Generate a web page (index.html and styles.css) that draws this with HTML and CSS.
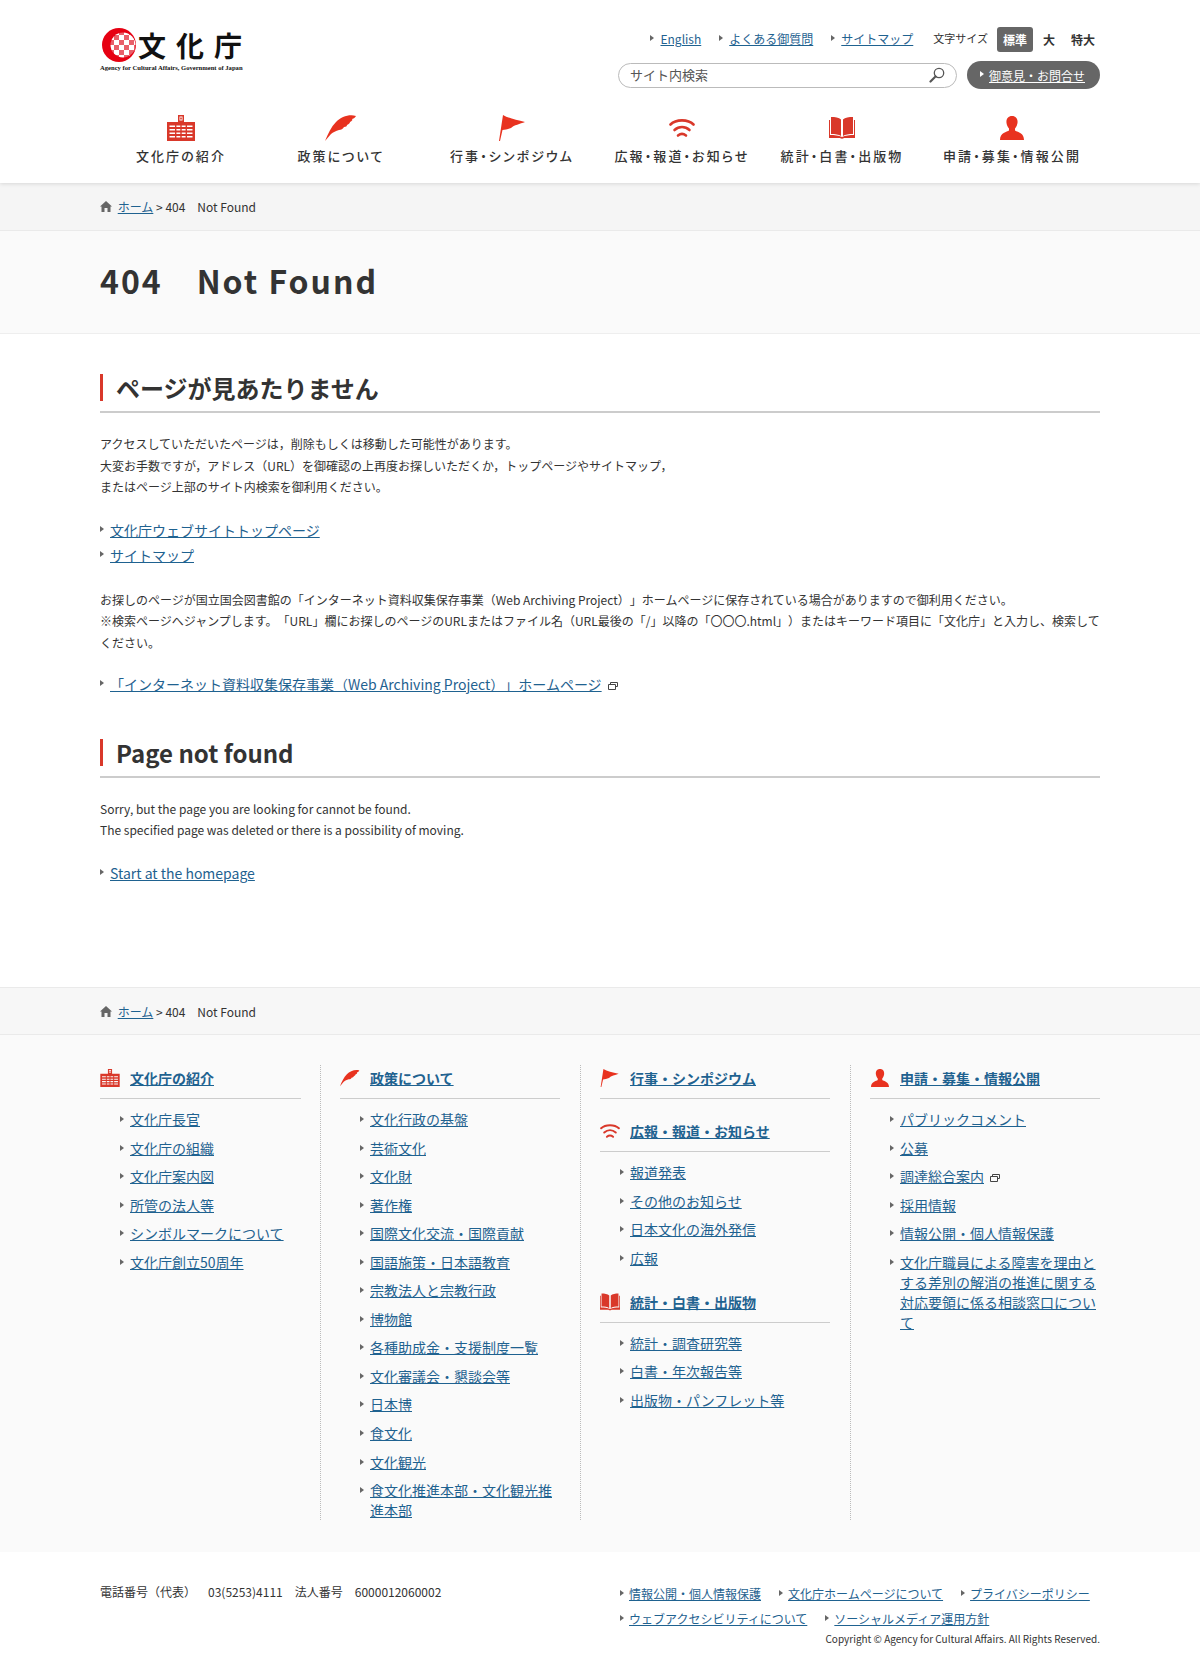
FILE: index.html
```html
<!DOCTYPE html>
<html lang="ja">

<head>
    <meta charset="UTF-8">
    <meta name="viewport" content="width=device-width, initial-scale=1.0">
    <title>404 Not Found</title>
    <link rel="stylesheet" href="styles.css">
</head>

<body>
    <svg class="defs" width="0" height="0">
        <symbol id="i-building" viewBox="0 0 28 26">
            <path fill="#d9382a" fill-rule="evenodd" d="M11 0h6v7h11v19H0V7h11zM12.5 1.5v4h3v-4zM13.2 2.4h1.6v2.200h-1.6zM2.500 10.500v1.500h23v-1.500zM2.500 14v1.500h23V14zM2.500 17.500V19h23v-1.500zM2.500 21v1.500h23V21z"/>
            <path fill="#d9382a" d="M8 8h1.400v18H8zM13.300 8h1.400v18h-1.400zM18.600 8H20v18h-1.400z"/>
        </symbol>
        <symbol id="i-feather" viewBox="0 0 32 26">
            <path fill="#e8321f" d="M0 26C3 19 6 12 11 7 16 2 24-1 31 1c-1 2-3 3-4 3 1 1 0 2-2 3 0 1-1 2-3 3 0 1-1 2-3 2-1 2-3 3-5 3-3 1-6 2-8 4-2 2-4 5-6 7z"/>
        </symbol>
        <symbol id="i-flag" viewBox="0 0 27 26">
            <path fill="#e8321f" d="M4 0c5 3 13 5 22 7-5 2-11 3-14 6-3 1-6 2-8.500 2L1 26H0z"/>
        </symbol>
        <symbol id="i-wifi" viewBox="0 0 26 20">
            <g fill="none" stroke="#d9382a" stroke-width="2.600" stroke-linecap="round">
                <path d="M1.500 6.500C7 1 19 1 24.500 6.500"/>
                <path d="M5.500 12C10 8 16 8 20.500 12"/>
                <path d="M9 17.500c2.500-2 5.500-2 8 0"/>
            </g>
        </symbol>
        <symbol id="i-book" viewBox="0 0 26 22">
            <path fill="#d9382a" d="M2 0c4 0 8 .5 10 2.500V19C10 17.500 6 17 2 17zM24 0c-4 0-8 .5-10 2.500V19c2-1.500 6-2 10-2z"/>
            <path fill="#d9382a" d="M0 3h1v15c4 0 9 .5 12 2 3-1.500 8-2 12-2V3h1v18H15c-1 1-3 1-4 0H0z"/>
        </symbol>
        <symbol id="i-person" viewBox="0 0 24 24">
            <path fill="#e8321f" d="M12 0c4 0 6 3 5.500 7-.3 2.500-1.500 4.500-2.500 5.500v2c2 1.500 9 2 9 9.500H0c0-7.500 7-8 9-9.500v-2C8 11.500 6.800 9.500 6.500 7 6 3 8 0 12 0z"/>
        </symbol>
        <symbol id="i-ext" viewBox="0 0 10 8">
            <path fill="none" stroke="#444" stroke-width="1" d="M2.500 2.500V.5h7v4h-2M.5 2.500h7v5h-7z"/>
        </symbol>
        <symbol id="i-home" viewBox="0 0 12 11">
            <path fill="#666" d="M6 0l6 5.500h-1.500V11H7.500V7h-3v4H1.500V5.500H0z"/>
        </symbol>
    </svg>

    <header class="siteHeader">
        <div class="wrap headerTop">
            <a class="logo" href="#">
                <span class="logoRow">
                    <svg class="logoMark" viewBox="0 0 34 34">
                        <defs>
                            <pattern id="check" x="2" y="2" width="10" height="10" patternUnits="userSpaceOnUse">
                                <rect width="10" height="10" fill="#e8606a"/>
                                <rect width="5" height="5" fill="#fff"/>
                                <rect x="5" y="5" width="5" height="5" fill="#fff"/>
                            </pattern>
                        </defs>
                        <circle cx="17" cy="17" r="17" fill="#e60012"/>
                        <circle cx="21" cy="17" r="12.500" fill="url(#check)"/>
                    </svg>
                    <span class="logoName">文化庁</span>
                </span>
                <span class="logoEn">Agency for Cultural Affairs, Government of Japan</span>
            </a>
            <div class="headerTools">
                <div class="toolsRow">
                    <ul class="topLinks">
                        <li class="arrow"><a href="#">English</a></li>
                        <li class="arrow"><a href="#">よくある御質問</a></li>
                        <li class="arrow"><a href="#">サイトマップ</a></li>
                    </ul>
                    <div class="fontSize">
                        <span class="fontLabel">文字サイズ</span>
                        <span class="fontBtn active">標準</span>
                        <span class="fontBtn">大</span>
                        <span class="fontBtn">特大</span>
                    </div>
                </div>
                <div class="toolsRow searchRow">
                    <div class="search">
                        <span>サイト内検索</span>
                        <svg class="searchIcon" viewBox="0 0 16 16">
                            <circle cx="10" cy="6" r="4.700" fill="none" stroke="#555" stroke-width="1.300"/>
                            <path d="M6.500 9.500L1.500 14.500" stroke="#555" stroke-width="2.200" stroke-linecap="round"/>
                        </svg>
                    </div>
                    <a class="contactBtn" href="#">御意見・お問合せ</a>
                </div>
            </div>
        </div>
        <nav class="wrap gnav">
            <a href="#"><svg class="gi gi28"><use href="#i-building"/></svg>文化庁の紹介</a>
            <a href="#"><svg class="gi gi32"><use href="#i-feather"/></svg>政策について</a>
            <a href="#"><svg class="gi gi27"><use href="#i-flag"/></svg>行事・シンポジウム</a>
            <a href="#"><svg class="gi gi26"><use href="#i-wifi"/></svg>広報・報道・お知らせ</a>
            <a href="#"><svg class="gi gi26"><use href="#i-book"/></svg>統計・白書・出版物</a>
            <a href="#"><svg class="gi gi24"><use href="#i-person"/></svg>申請・募集・情報公開</a>
        </nav>
    </header>

    <div class="crumbs">
        <div class="wrap">
            <svg class="homeIcon"><use href="#i-home"/></svg>
            <a href="#">ホーム</a> &gt; 404　Not Found
        </div>
    </div>

    <div class="titleBand">
        <h1 class="wrap">404　Not Found</h1>
    </div>

    <main class="wrap mainBlock">
        <h2><span>ページが見あたりません</span></h2>
        <p>アクセスしていただいたページは，削除もしくは移動した可能性があります。<br>大変お手数ですが，アドレス（URL）を御確認の上再度お探しいただくか，トップページやサイトマップ，<br>またはページ上部のサイト内検索を御利用ください。</p>
        <ul class="linkList">
            <li class="arrow"><a href="#">文化庁ウェブサイトトップページ</a></li>
            <li class="arrow"><a href="#">サイトマップ</a></li>
        </ul>
        <p>お探しのページが国立国会図書館の「インターネット資料収集保存事業（Web Archiving Project）」ホームページに保存されている場合がありますので御利用ください。<br>※検索ページへジャンプします。「URL」欄にお探しのページのURLまたはファイル名（URL最後の「/」以降の「〇〇〇.html」）またはキーワード項目に「文化庁」と入力し、検索してください。</p>
        <ul class="linkList short">
            <li class="arrow"><a href="#">「インターネット資料収集保存事業（Web Archiving Project）」ホームページ</a><svg class="extIcon"><use href="#i-ext"/></svg></li>
        </ul>

        <h2 class="second"><span>Page not found</span></h2>
        <p>Sorry, but the page you are looking for cannot be found.<br>The specified page was deleted or there is a possibility of moving.</p>
        <ul class="linkList">
            <li class="arrow"><a href="#">Start at the homepage</a></li>
        </ul>
    </main>

    <div class="crumbs crumbsBottom">
        <div class="wrap">
            <svg class="homeIcon"><use href="#i-home"/></svg>
            <a href="#">ホーム</a> &gt; 404　Not Found
        </div>
    </div>

    <div class="footNav">
        <div class="wrap footCols">
            <div class="footCol col1">
                <h3><svg class="fi"><use href="#i-building"/></svg><a href="#">文化庁の紹介</a></h3>
                <ul>
                    <li class="arrow"><a href="#">文化庁長官</a></li>
                    <li class="arrow"><a href="#">文化庁の組織</a></li>
                    <li class="arrow"><a href="#">文化庁案内図</a></li>
                    <li class="arrow"><a href="#">所管の法人等</a></li>
                    <li class="arrow"><a href="#">シンボルマークについて</a></li>
                    <li class="arrow"><a href="#">文化庁創立50周年</a></li>
                </ul>
            </div>
            <div class="footCol col2">
                <h3><svg class="fi"><use href="#i-feather"/></svg><a href="#">政策について</a></h3>
                <ul>
                    <li class="arrow"><a href="#">文化行政の基盤</a></li>
                    <li class="arrow"><a href="#">芸術文化</a></li>
                    <li class="arrow"><a href="#">文化財</a></li>
                    <li class="arrow"><a href="#">著作権</a></li>
                    <li class="arrow"><a href="#">国際文化交流・国際貢献</a></li>
                    <li class="arrow"><a href="#">国語施策・日本語教育</a></li>
                    <li class="arrow"><a href="#">宗教法人と宗教行政</a></li>
                    <li class="arrow"><a href="#">博物館</a></li>
                    <li class="arrow"><a href="#">各種助成金・支援制度一覧</a></li>
                    <li class="arrow"><a href="#">文化審議会・懇談会等</a></li>
                    <li class="arrow"><a href="#">日本博</a></li>
                    <li class="arrow"><a href="#">食文化</a></li>
                    <li class="arrow"><a href="#">文化観光</a></li>
                    <li class="arrow"><a href="#">食文化推進本部・文化観光推進本部</a></li>
                </ul>
            </div>
            <div class="footCol col3">
                <h3><svg class="fi"><use href="#i-flag"/></svg><a href="#">行事・シンポジウム</a></h3>
                <h3 class="next"><svg class="fi"><use href="#i-wifi"/></svg><a href="#">広報・報道・お知らせ</a></h3>
                <ul>
                    <li class="arrow"><a href="#">報道発表</a></li>
                    <li class="arrow"><a href="#">その他のお知らせ</a></li>
                    <li class="arrow"><a href="#">日本文化の海外発信</a></li>
                    <li class="arrow"><a href="#">広報</a></li>
                </ul>
                <h3 class="next"><svg class="fi"><use href="#i-book"/></svg><a href="#">統計・白書・出版物</a></h3>
                <ul>
                    <li class="arrow"><a href="#">統計・調査研究等</a></li>
                    <li class="arrow"><a href="#">白書・年次報告等</a></li>
                    <li class="arrow"><a href="#">出版物・パンフレット等</a></li>
                </ul>
            </div>
            <div class="footCol col4">
                <h3><svg class="fi"><use href="#i-person"/></svg><a href="#">申請・募集・情報公開</a></h3>
                <ul>
                    <li class="arrow"><a href="#">パブリックコメント</a></li>
                    <li class="arrow"><a href="#">公募</a></li>
                    <li class="arrow"><a href="#">調達総合案内</a><svg class="extIcon"><use href="#i-ext"/></svg></li>
                    <li class="arrow"><a href="#">採用情報</a></li>
                    <li class="arrow"><a href="#">情報公開・個人情報保護</a></li>
                    <li class="arrow"><a href="#">文化庁職員による障害を理由とする差別の解消の推進に関する対応要領に係る相談窓口について</a></li>
                </ul>
            </div>
        </div>
    </div>

    <footer class="wrap siteFooter">
        <div class="footInfo">
            <span>電話番号（代表）</span><span>03(5253)4111</span><span>法人番号</span><span>6000012060002</span>
        </div>
        <div class="footRight">
            <ul class="footLinks">
                <li class="arrow"><a href="#">情報公開・個人情報保護</a></li>
                <li class="arrow"><a href="#">文化庁ホームページについて</a></li>
                <li class="arrow"><a href="#">プライバシーポリシー</a></li>
                <li class="arrow"><a href="#">ウェブアクセシビリティについて</a></li>
                <li class="arrow"><a href="#">ソーシャルメディア運用方針</a></li>
            </ul>
            <p class="copyright">Copyright © Agency for Cultural Affairs. All Rights Reserved.</p>
        </div>
    </footer>
</body>

</html>
```

FILE: styles.css
```css
* {
    box-sizing: border-box;
}

body {
    margin: 0;
    color: #333;
    background: #fff;
    font-family: "Noto Sans CJK JP", "Noto Sans", sans-serif;
    font-size: 12px;
    line-height: 1.8;
    text-spacing-trim: space-all;
}

a {
    color: #1f6290;
}

ul {
    margin: 0;
    padding: 0;
    list-style: none;
}

.defs {
    position: absolute;
}

.wrap {
    width: 1000px;
    margin-left: 100px;
    margin-right: 100px;
}

/* little triangle in front of links */
.arrow {
    position: relative;
    padding-left: 10px;
}

.arrow::before {
    content: "";
    position: absolute;
    left: 0;
    top: 8px;
    border-left: 4px solid #666;
    border-top: 3.500px solid transparent;
    border-bottom: 3.500px solid transparent;
}

/* header */
.siteHeader {
    position: relative;
    height: 183px;
    background: #fff;
    box-shadow: 0 1px 4px rgba(0, 0, 0, 0.12);
}

.headerTop {
    display: flex;
    justify-content: space-between;
    height: 115px;
}

.logo {
    display: block;
    width: 145px;
    padding-top: 28px;
    padding-left: 2px;
    color: #111;
    text-decoration: none;
}

.logoRow {
    display: flex;
    align-items: center;
    height: 34px;
}

.logoMark {
    width: 34px;
    height: 34px;
    flex: none;
}

.logoName {
    margin-left: 2px;
    font-size: 28px;
    font-weight: 700;
    line-height: 34px;
    letter-spacing: 10px;
    white-space: nowrap;
}

.logoEn {
    display: block;
    margin-top: 2px;
    margin-left: -2px;
    font-family: "Liberation Serif", serif;
    font-size: 6.600px;
    font-weight: 700;
    line-height: 8px;
    white-space: nowrap;
}

.headerTools {
    padding-top: 26px;
}

.toolsRow {
    display: flex;
    justify-content: flex-end;
    align-items: center;
}

.topLinks {
    display: flex;
    gap: 18px;
    margin-right: 20px;
}

.topLinks .arrow::before {
    top: 9px;
}

.topLinks li {
    line-height: 26px;
}

.fontSize {
    display: flex;
    align-items: center;
    font-size: 11px;
}

.fontLabel {
    margin-right: 9px;
}

.fontBtn {
    padding: 0 6px;
    margin-right: 4px;
    border-radius: 3px;
    font-size: 12px;
    font-weight: 700;
    line-height: 25px;
}

.fontBtn:last-child {
    margin-right: -1px;
}

.fontBtn.active {
    color: #fff;
    background: #666;
}

.searchRow {
    margin-top: 9px;
}

.search {
    display: flex;
    justify-content: space-between;
    align-items: center;
    width: 339px;
    height: 25px;
    padding: 0 11px;
    border: 1px solid #bbb;
    border-radius: 13px;
    color: #555;
    font-size: 13px;
}

.searchIcon {
    width: 16px;
    height: 16px;
}

.contactBtn {
    position: relative;
    display: block;
    width: 133px;
    height: 28px;
    margin-left: 10px;
    padding-left: 22px;
    border-radius: 14px;
    color: #fff;
    background: #666;
    line-height: 29px;
}

.contactBtn::before {
    content: "";
    position: absolute;
    left: 13px;
    top: 10px;
    border-left: 4px solid #fff;
    border-top: 3.500px solid transparent;
    border-bottom: 3.500px solid transparent;
}

.gnav {
    display: grid;
    grid-template-columns: 162px 158px 184px 156px 164px 176px;
}

.gnav a {
    display: flex;
    flex-direction: column;
    align-items: center;
    color: #333;
    font-size: 13px;
    font-weight: 500;
    font-feature-settings: "palt";
    line-height: 20px;
    letter-spacing: 2.100px;
    text-decoration: none;
    white-space: nowrap;
}

.gi {
    height: 26px;
    margin-bottom: 5px;
}

.gi28 {
    width: 28px;
}

.gi32 {
    width: 32px;
}

.gi27 {
    width: 27px;
}

.gi26 {
    width: 26px;
}

.gi24 {
    width: 24px;
}

/* breadcrumb */
.crumbs {
    height: 48px;
    background: #f5f5f5;
    border-bottom: 1px solid #eaeaea;
    line-height: 47px;
}

.crumbsBottom {
    background: #f7f7f7;
    border-top: 1px solid #eaeaea;
}

.homeIcon {
    width: 12px;
    height: 11px;
    margin-right: 3px;
}

/* page title */
.titleBand {
    height: 103px;
    background: #fafafa;
    border-bottom: 1px solid #eee;
}

.titleBand h1 {
    margin-top: 0;
    margin-bottom: 0;
    font-size: 32px;
    font-weight: 700;
    line-height: 99px;
    letter-spacing: 2px;
}

/* main */
.mainBlock {
    height: 653px;
    padding-top: 40px;
}

h2 {
    margin: 0 0 20px;
    padding-bottom: 10px;
    border-bottom: 2px solid #ccc;
    font-size: 24px;
    font-weight: 700;
    line-height: 27px;
}

h2 span {
    display: block;
    padding-left: 13px;
    border-left: 3px solid #d9382a;
}

h2.second {
    margin-top: 42px;
}

.mainBlock p {
    margin: 0;
}

.linkList {
    margin: 20px 0 21px;
    font-size: 14px;
    line-height: 25px;
}

.linkList.short {
    margin-top: 18px;
}

.extIcon {
    width: 10px;
    height: 8px;
    margin-left: 6px;
}

/* footer nav */
.footNav {
    height: 517px;
    padding-top: 30px;
    background: #fafafa;
}

.footCols {
    display: flex;
    height: 455px;
}

.footCol {
    height: 455px;
    padding-right: 20px;
    margin-right: 19px;
    border-right: 1px dotted #bbb;
    font-size: 14px;
}

.col1 {
    width: 221px;
    padding-right: 19px;
}

.col2 {
    width: 241px;
}

.col3 {
    width: 251px;
}

.col4 {
    width: 230px;
    margin-right: 0;
    padding-right: 0;
    border-right: 0;
}

.footCol h3 {
    display: flex;
    align-items: center;
    height: 34px;
    margin: 0 0 10px;
    border-bottom: 1px solid #ccc;
    padding-bottom: 7px;
    font-size: 14px;
    font-weight: 700;
    line-height: 20px;
}

.footCol h3.next {
    margin-top: 19px;
}

.fi {
    width: 20px;
    height: 18px;
    flex: none;
    margin-right: 10px;
}

.footCol ul {
    padding-left: 20px;
}

.footCol ul + h3.next {
    margin-top: 21px;
}

.footCol li {
    margin-bottom: 8.550px;
    line-height: 20px;
}

.footCol .arrow::before {
    top: 7px;
}

/* bottom */
.siteFooter {
    display: flex;
    justify-content: space-between;
    height: 128px;
    padding-top: 30px;
}

.footInfo {
    display: flex;
    gap: 12px;
    line-height: 20px;
}

.footRight {
    width: 480px;
}

.footLinks {
    display: flex;
    flex-wrap: wrap;
    column-gap: 18px;
    line-height: 24.500px;
}

.footLinks .arrow {
    padding-left: 9px;
}

.copyright {
    margin: 0;
    font-size: 10px;
    line-height: 16px;
    text-align: right;
}
```
